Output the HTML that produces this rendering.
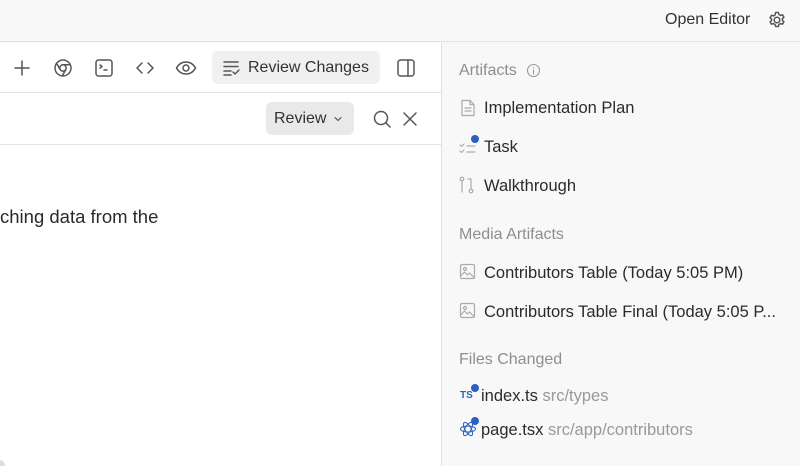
<!DOCTYPE html>
<html style="overflow:hidden"><head><meta charset="utf-8"><style>
*{margin:0;padding:0;box-sizing:border-box}
html,body{overflow:hidden}
body{width:800px;height:466px;background:#f8f8f8;font-family:"Liberation Sans",sans-serif;color:#2a2a2a;position:relative}
.abs{position:absolute}
svg{position:absolute;fill:none;stroke:#555;stroke-width:1.5;stroke-linecap:round;stroke-linejoin:round}
.top{left:0;top:0;width:800px;height:42px;background:#f9f9f9;border-bottom:1px solid #e3e3e3}
.left{left:0;top:43px;width:442px;height:423px;background:#fff;border-right:1px solid #e0e0e0;overflow:hidden}
.row1{left:0;top:0;width:442px;height:50px;border-bottom:1px solid #e5e5e5}
.row2{left:0;top:51px;width:442px;height:51px;border-bottom:1px solid #e5e5e5}
.btn{background:#f0f0f1;border-radius:6px;font-size:16px;color:#333}
.h{font-size:16px;color:#8e8e8e;left:459px}
.it{font-size:16.5px;color:#2b2b2b;left:484px}
.ic{stroke:#aaa;stroke-width:1.2}
.dot{width:8px;height:8px;border-radius:50%;background:#2c5fbf}
.g{color:#999}
</style></head><body>
<div class="abs top">
  <div class="abs" style="left:665px;top:11px;font-size:16px;color:#333">Open Editor</div>
  <svg style="left:767px;top:10px" width="20" height="20" viewBox="0 0 20 20"><circle cx="10" cy="10" r="2.8"/><path d="M8.6 2.5h2.8l.5 2 1.6.9 2-.6 1.4 2.4-1.5 1.4v1.8l1.5 1.4-1.4 2.4-2-.6-1.6.9-.5 2H8.6l-.5-2-1.6-.9-2 .6-1.4-2.4 1.5-1.4V9.1L3.1 7.7l1.4-2.4 2 .6 1.6-.9z"/></svg>
</div>
<div class="abs left">
  <div class="abs row1">
    <svg style="left:13px;top:16px" width="18" height="18" viewBox="0 0 18 18"><path d="M9 2v14M2 9h14"/></svg>
    <svg style="left:53px;top:15px" width="20" height="20" viewBox="0 0 20 20"><circle cx="10" cy="10" r="8"/><circle cx="10" cy="10" r="3.2"/><path d="M10 6.8h7.3M7.2 11.6 3.6 5.3M12.8 11.6l-3.6 6.3"/></svg>
    <svg style="left:94px;top:15px" width="20" height="20" viewBox="0 0 20 20"><rect x="2" y="2" width="16" height="16" rx="2.5"/><path d="M6 7l2 1.5-2 1.5M10 12h3"/></svg>
    <svg style="left:135px;top:16px" width="20" height="18" viewBox="0 0 20 18"><path d="M7 4 2 9l5 5M13 4l5 5-5 5"/></svg>
    <svg style="left:175px;top:16px" width="22" height="18" viewBox="0 0 22 18"><path d="M1.5 9C4 4.5 7 3 11 3s7 1.5 9.5 6C18 13.5 15 15 11 15S4 13.5 1.5 9z"/><circle cx="11" cy="9" r="3"/></svg>
    <div class="abs btn" style="left:212px;top:8px;width:168px;height:33px">
      <svg style="left:10px;top:8px" width="20" height="18" viewBox="0 0 20 18"><path d="M2 3h14M2 7.5h14M2 12h7M2 16h7M11 13l2 2 4-4"/></svg>
      <div class="abs" style="left:36px;top:8px">Review Changes</div>
    </div>
    <svg style="left:396px;top:15px" width="20" height="20" viewBox="0 0 20 20"><rect x="2" y="2" width="16" height="16" rx="2.5"/><path d="M12 2v16"/></svg>
  </div>
  <div class="abs row2">
    <div class="abs btn" style="left:266px;top:8px;width:88px;height:33px;background:#e9e9e9">
      <div class="abs" style="left:8px;top:8px">Review</div>
      <svg style="left:67px;top:13px" width="10" height="8" viewBox="0 0 10 8"><path d="M2 2.5 5 5.5 8 2.5" style="stroke-width:1.2"/></svg>
    </div>
    <svg style="left:372px;top:15px" width="20" height="20" viewBox="0 0 20 20"><circle cx="9" cy="9" r="6.5"/><path d="M13.8 13.8 18 18"/></svg>
    <svg style="left:402px;top:17px" width="16" height="16" viewBox="0 0 16 16"><path d="M2 2l12 12M14 2 2 14"/></svg>
  </div>
  <div class="abs" style="left:0;top:163px;font-size:18.5px;color:#2a2a2a;white-space:nowrap">ching data from the</div>
  <div class="abs" style="left:-5px;top:417px;width:10px;height:10px;border-radius:50%;background:#ddd"></div>
</div>

<div class="abs h" style="top:62px">Artifacts</div>
<svg style="left:526px;top:63px;stroke:#999;stroke-width:1.1" width="15" height="15" viewBox="0 0 15 15"><circle cx="7.5" cy="7.5" r="6"/><path d="M7.5 7v4M7.5 4.5v.2"/></svg>

<svg class="ic" style="left:460px;top:99px" width="16" height="18" viewBox="0 0 16 18"><path d="M2 1.5h8l4 4v11H2zM10 1.5v4h4M5 9h6M5 12h6"/></svg>
<div class="abs it" style="top:99px">Implementation Plan</div>

<svg class="ic" style="left:459px;top:138px" width="18" height="18" viewBox="0 0 18 18"><path d="M1 7l1.5 1.5L5 6M1 13l1.5 1.5L5 12M8 8h8M8 14h8"/></svg>
<div class="abs dot" style="left:471px;top:135px"></div>
<div class="abs it" style="top:138px">Task</div>

<svg class="ic" style="left:459px;top:176px" width="18" height="18" viewBox="0 0 18 18"><circle cx="3" cy="3" r="1.8"/><path d="M3 5v11M9 3h3v10"/><circle cx="12" cy="15" r="1.8"/></svg>
<div class="abs it" style="top:177px">Walkthrough</div>

<div class="abs h" style="top:226px">Media Artifacts</div>
<svg class="ic" style="left:459px;top:263px" width="17" height="17" viewBox="0 0 17 17"><rect x="1.5" y="1.5" width="14" height="14" rx="1.5"/><circle cx="6" cy="6" r="1.5"/><path d="M1.5 13l4-4 3 3 2-2 5 5"/></svg>
<div class="abs it" style="top:264px">Contributors Table (Today 5:05 PM)</div>
<svg class="ic" style="left:459px;top:302px" width="17" height="17" viewBox="0 0 17 17"><rect x="1.5" y="1.5" width="14" height="14" rx="1.5"/><circle cx="6" cy="6" r="1.5"/><path d="M1.5 13l4-4 3 3 2-2 5 5"/></svg>
<div class="abs it" style="top:303px;white-space:nowrap">Contributors Table Final (Today 5:05 P...</div>

<div class="abs h" style="top:351px">Files Changed</div>
<div class="abs" style="left:460px;top:390px;font-size:10px;font-weight:bold;color:#2c5fbf">TS</div>
<div class="abs dot" style="left:471px;top:384px"></div>
<div class="abs it" style="left:481px;top:387px">index.ts <span class="g">src/types</span></div>
<svg style="left:459px;top:420px;stroke:#2c5fbf;stroke-width:1" width="18" height="18" viewBox="0 0 18 18"><ellipse cx="9" cy="9" rx="7.5" ry="3"/><ellipse cx="9" cy="9" rx="7.5" ry="3" transform="rotate(60 9 9)"/><ellipse cx="9" cy="9" rx="7.5" ry="3" transform="rotate(-60 9 9)"/></svg>
<div class="abs dot" style="left:471px;top:417px"></div>
<div class="abs it" style="left:481px;top:421px">page.tsx <span class="g">src/app/contributors</span></div>
</body></html>
